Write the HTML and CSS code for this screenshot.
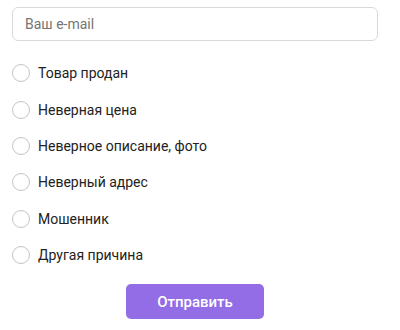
FILE: index.html
```html
<!DOCTYPE html>
<html lang="ru">
  <head>
    <meta charset="UTF-8" />
    <meta name="viewport" content="width=device-width, initial-scale=1.0" />
    <title>Жалоба</title>
    <link rel="stylesheet" href="styles.css">
  </head>
  <body>
    <form class="report-form">
      <input type="email" class="email-input" placeholder="Ваш e-mail" />

      <div class="reasons">
        <label class="reason"><input type="radio" name="reason" /><span class="radio"></span>Товар продан</label>
        <label class="reason"><input type="radio" name="reason" /><span class="radio"></span>Неверная цена</label>
        <label class="reason"><input type="radio" name="reason" /><span class="radio"></span>Неверное описание, фото</label>
        <label class="reason"><input type="radio" name="reason" /><span class="radio"></span>Неверный адрес</label>
        <label class="reason"><input type="radio" name="reason" /><span class="radio"></span>Мошенник</label>
        <label class="reason"><input type="radio" name="reason" /><span class="radio"></span>Другая причина</label>
      </div>

      <div class="actions">
        <button type="submit" class="submit-btn">Отправить</button>
      </div>
    </form>
  </body>
</html>
```

FILE: styles.css
```css
body {
  margin: 0;
  padding: 0;
  font-family: Roboto, "Liberation Sans", sans-serif;
  background-color: #fff;
  color: #222;
}

.report-form {
  padding: 7px 22px 0 12px;
}

.email-input {
  display: block;
  width: 100%;
  height: 34px;
  padding: 0 12px;
  box-sizing: border-box;
  border: 1px solid #d9d9d9;
  border-radius: 6px;
  font-family: inherit;
  font-size: 14px;
  color: #222;
  outline: none;
}

.email-input::placeholder {
  color: #757575;
}

/* Reasons */
.reasons {
  display: flex;
  flex-direction: column;
  margin-top: 14px;
}

.reason {
  display: flex;
  align-items: center;
  height: 36.4px;
  font-size: 14px;
  cursor: pointer;
}

.reason input {
  display: none;
}

.radio {
  width: 16px;
  height: 16px;
  margin-right: 8px;
  border: 1px solid #c4c4c4;
  border-radius: 50%;
  box-sizing: content-box;
}

.reason input:checked + .radio {
  border: 5px solid #9370e5;
  width: 8px;
  height: 8px;
}

/* Button */
.actions {
  display: flex;
  justify-content: center;
  margin-top: 11px;
}

.submit-btn {
  width: 138px;
  height: 35px;
  background-color: #936de6;
  color: #fff;
  border: none;
  border-radius: 5px;
  font-family: inherit;
  font-size: 15px;
  font-weight: 500;
  cursor: pointer;
}

.submit-btn:hover {
  background-color: #7f58d8;
}
```
